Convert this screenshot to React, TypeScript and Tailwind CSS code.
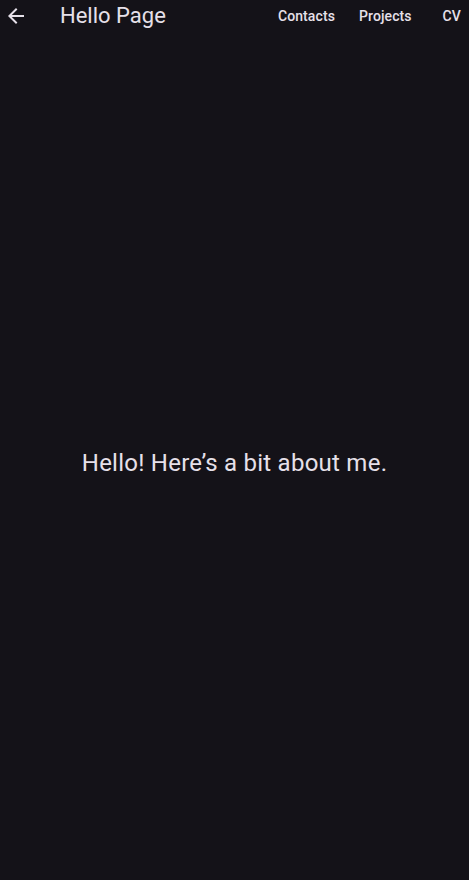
import React from "react";

const NAV = ["Contacts", "Projects"];

function BackArrow() {
  return (
    <svg width="24" height="24" viewBox="0 0 24 24" fill="#e6e0e9">
      <path d="M20 11H7.83l5.59-5.59L12 4l-8 8 8 8 1.41-1.41L7.83 13H20v-2z" />
    </svg>
  );
}

export default function App() {
  return (
    <div
      className="min-h-screen h-[880px] flex flex-col bg-[#141218] text-[#e6e0e9]"
      style={{ fontFamily: "Roboto, 'Noto Sans', sans-serif" }}
    >
      {/* app bar */}
      <header className="h-[32px] flex items-center">
        <button className="w-[32px] h-[32px] flex items-center justify-center">
          <BackArrow />
        </button>
        <h1 className="ml-[28px] text-[22px] leading-[28px] font-normal">Hello Page</h1>
        <nav className="ml-auto flex items-center">
          {NAV.map((n) => (
            <button
              key={n}
              className="px-3 h-[32px] text-[14px] font-medium tracking-[0.1px] text-[#e6e0e9]"
            >
              {n}
            </button>
          ))}
          <button className="pl-[19px] pr-[8px] h-[32px] text-[14px] font-medium tracking-[0.1px] text-[#e6e0e9]">
            CV
          </button>
        </nav>
      </header>

      {/* body */}
      <main className="flex-1 flex items-center justify-center pt-[14px]">
        <p className="text-[24px] leading-[32px] tracking-[0.25px] text-center">
          Hello! Here’s a bit about me.
        </p>
      </main>
    </div>
  );
}
